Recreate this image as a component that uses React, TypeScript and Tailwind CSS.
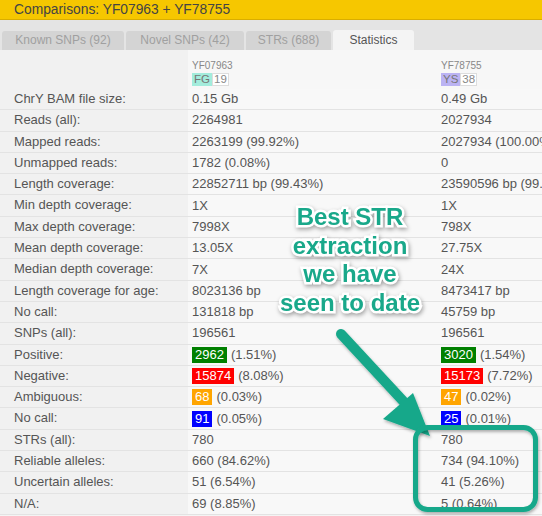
import React from 'react';

type Badge = { n: string; cls: string };
type Row = { label: string; a: React.ReactNode; b: React.ReactNode };

const Tag = ({ n, cls }: Badge) => (
  <span className={`${cls} text-white px-[3px] mr-[4px] leading-[16px] inline-block`}>{n}</span>
);

const rows: Row[] = [
  { label: 'ChrY BAM file size:', a: '0.15 Gb', b: '0.49 Gb' },
  { label: 'Reads (all):', a: '2264981', b: '2027934' },
  { label: 'Mapped reads:', a: '2263199 (99.92%)', b: '2027934 (100.00%)' },
  { label: 'Unmapped reads:', a: '1782 (0.08%)', b: '0' },
  { label: 'Length coverage:', a: '22852711 bp (99.43%)', b: '23590596 bp (99.83%)' },
  { label: 'Min depth coverage:', a: '1X', b: '1X' },
  { label: 'Max depth coverage:', a: '7998X', b: '798X' },
  { label: 'Mean depth coverage:', a: '13.05X', b: '27.75X' },
  { label: 'Median depth coverage:', a: '7X', b: '24X' },
  { label: 'Length coverage for age:', a: '8023136 bp', b: '8473417 bp' },
  { label: 'No call:', a: '131818 bp', b: '45759 bp' },
  { label: 'SNPs (all):', a: '196561', b: '196561' },
  {
    label: 'Positive:',
    a: <><Tag n="2962" cls="bg-[#008000]" />(1.51%)</>,
    b: <><Tag n="3020" cls="bg-[#008000]" />(1.54%)</>,
  },
  {
    label: 'Negative:',
    a: <><Tag n="15874" cls="bg-[#ff0000]" />(8.08%)</>,
    b: <><Tag n="15173" cls="bg-[#ff0000]" />(7.72%)</>,
  },
  {
    label: 'Ambiguous:',
    a: <><Tag n="68" cls="bg-[#ffa500]" />(0.03%)</>,
    b: <><Tag n="47" cls="bg-[#ffa500]" />(0.02%)</>,
  },
  {
    label: 'No call:',
    a: <><Tag n="91" cls="bg-[#0000ff]" />(0.05%)</>,
    b: <><Tag n="25" cls="bg-[#0000ff]" />(0.01%)</>,
  },
  { label: 'STRs (all):', a: '780', b: '780' },
  { label: 'Reliable alleles:', a: '660 (84.62%)', b: '734 (94.10%)' },
  { label: 'Uncertain alleles:', a: '51 (6.54%)', b: '41 (5.26%)' },
  { label: 'N/A:', a: '69 (8.85%)', b: '5 (0.64%)' },
];

const tabs = [
  { name: 'Known SNPs (92)', w: 'w-[122px]' },
  { name: 'Novel SNPs (42)', w: 'w-[118px]' },
  { name: 'STRs (688)', w: 'w-[85px]' },
];

const Sample = ({ id, tag, tagCls, n }: { id: string; tag: string; tagCls: string; n: string }) => (
  <div className="pt-[10px] pl-[4px] text-[10px] leading-[12px] text-[#888]">
    <div>{id}</div>
    <div className="flex mt-[1px] text-[11.5px]">
      <span className={`${tagCls} px-[2px] text-[#777] leading-[13px]`}>{tag}</span>
      <span className="border border-[#ddd] bg-white px-[1px] text-[#888] leading-[11px]">{n}</span>
    </div>
  </div>
);

export default function App() {
  return (
    <div className="relative w-[542px] h-[516px] overflow-hidden bg-[#f4f4f4] font-['Liberation_Sans',Arial,sans-serif]">
      <div className="h-[20px] bg-[#f6c700] border-b border-[#d9ad00] pl-[14px] text-[13.8px] leading-[19px] text-[#444]">
        Comparisons: YF07963 + YF78755
      </div>
      <div className="h-[30px] bg-[#e4e4e4] flex items-end gap-[2px] pl-[2px]">
        {tabs.map((t) => (
          <div
            key={t.name}
            className={`${t.w} h-[19px] bg-[#d4d4d4] rounded-t-[3px] text-center text-[12px] leading-[19px] text-[#a0a0a0]`}
          >
            {t.name}
          </div>
        ))}
        <div className="w-[81px] h-[20px] bg-[#f4f4f4] rounded-t-[3px] text-center text-[12px] leading-[20px] text-[#555]">
          Statistics
        </div>
      </div>

      <div className="grid grid-cols-[188px_249px_220px] text-[13px] text-[#555] whitespace-nowrap">
        <div className="h-[39px] bg-[#f1f1f1]" />
        <div className="h-[39px] bg-[#f7f7f7]">
          <Sample id="YF07963" tag="FG" tagCls="bg-[#a3ecdc]" n="19" />
        </div>
        <div className="h-[39px] bg-[#f7f7f7]">
          <Sample id="YF78755" tag="YS" tagCls="bg-[#bbb3f3]" n="38" />
        </div>
        {rows.map((r, i) => (
          <React.Fragment key={i}>
            <div className="h-[21.3px] border-b border-[#e3e3e3] bg-[#f1f1f1] pl-[14px] leading-[20px]">{r.label}</div>
            <div className="h-[21.3px] border-b border-[#e3e3e3] bg-[#f8f8f8] pl-[4px] leading-[20px] flex items-center">{r.a}</div>
            <div className="h-[21.3px] border-b border-[#e3e3e3] bg-[#f8f8f8] pl-[4px] leading-[20px] flex items-center">{r.b}</div>
          </React.Fragment>
        ))}
      </div>

      <div className="absolute left-[262px] top-[203px] w-[176px] text-center text-[24px] leading-[28.5px] font-bold text-[#19a88a] [-webkit-text-stroke:5px_white] [paint-order:stroke_fill] [filter:drop-shadow(1px_2px_2px_rgba(0,0,0,0.35))]">
        Best STR<br />extraction<br />we have<br />seen to date
      </div>

      <svg className="absolute left-0 top-0" width="542" height="516" viewBox="0 0 542 516">
        <defs>
          <filter id="sh" x="-20%" y="-20%" width="140%" height="140%">
            <feDropShadow dx="1" dy="2" stdDeviation="1.5" floodColor="#000" floodOpacity="0.3" />
          </filter>
        </defs>
        <g filter="url(#sh)">
          <line x1="341" y1="334" x2="404" y2="402" stroke="#19a88a" strokeWidth="10" strokeLinecap="round" />
          <polygon points="383,419 413,393 430,436" fill="#19a88a" />
        </g>
        <rect x="415.5" y="427.5" width="120" height="82" rx="12" fill="none" stroke="#19a88a" strokeWidth="5" filter="url(#sh)" />
      </svg>
    </div>
  );
}
